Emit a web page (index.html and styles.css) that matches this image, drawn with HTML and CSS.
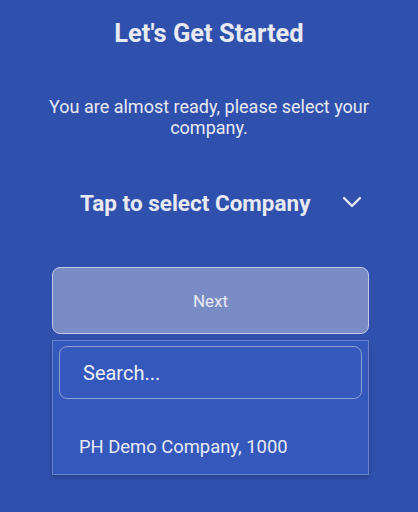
FILE: index.html
```html
<!DOCTYPE html>
<html>
<head>
<meta charset="utf-8">
<link rel="stylesheet" href="styles.css">
</head>
<body>
<div class="screen">
  <h1 class="title">Let's Get Started</h1>
  <p class="subtitle">You are almost ready, please select your company.</p>
  <div class="selector">
    <span class="selector-label">Tap to select Company</span>
    <svg class="chevron" width="20" height="12" viewBox="0 0 20 12"><path d="M2 2 L10 10 L18 2" fill="none" stroke="#e8eaf2" stroke-width="2.4" stroke-linecap="round" stroke-linejoin="round"/></svg>
  </div>
  <div class="actions">
    <button class="next">Next</button>
    <div class="dropdown">
      <div class="search">Search...</div>
      <div class="option">PH Demo Company, 1000</div>
    </div>
  </div>
</div>
</body>
</html>
```
FILE: styles.css
```css
html, body {
  margin: 0;
  padding: 0;
  background: #3050ad;
}
body {
  font-family: Roboto, "Noto Sans", sans-serif;
  color: #e8eaf2;
  width: 418px;
  height: 512px;
  overflow: hidden;
}
.screen {
  display: flex;
  flex-direction: column;
  align-items: center;
}
.title {
  margin: 17px 0 0;
  font-size: 25.5px;
  font-weight: 700;
  line-height: 32px;
  text-align: center;
}
.subtitle {
  margin: 47px 0 0;
  width: 340px;
  font-size: 18px;
  line-height: 21px;
  text-align: center;
}
.selector {
  margin-top: 50px;
  display: flex;
  align-items: center;
  width: 418px;
  height: 30px;
}
.selector-label {
  margin-left: 80px;
  font-size: 22.5px;
  font-weight: 700;
}
.chevron {
  margin-left: 32px;
  margin-top: -3px;
}
.actions {
  margin-top: 49px;
  margin-left: 3px;
  width: 317px;
  display: flex;
  flex-direction: column;
  gap: 6px;
}
.next {
  height: 67px;
  border-radius: 8px;
  border: 1px solid #c0c8e6;
  background: #7a8cc6;
  color: #e8eaf2;
  font-family: Roboto, sans-serif;
  font-size: 17px;
}
.dropdown {
  height: 135px;
  box-sizing: border-box;
  background: #3558bd;
  border: 1px solid #6a82cc;
  box-shadow: 0 2px 4px rgba(0,0,0,0.2);
  padding: 5px 6px;
}
.search {
  height: 53px;
  box-sizing: border-box;
  border: 1px solid #8a9ed8;
  border-radius: 8px;
  padding-left: 23px;
  display: flex;
  align-items: center;
  font-size: 20px;
  color: #eef0f6;
}
.option {
  margin-top: 37px;
  padding-left: 20px;
  font-size: 18.4px;
  line-height: 22px;
}
```
